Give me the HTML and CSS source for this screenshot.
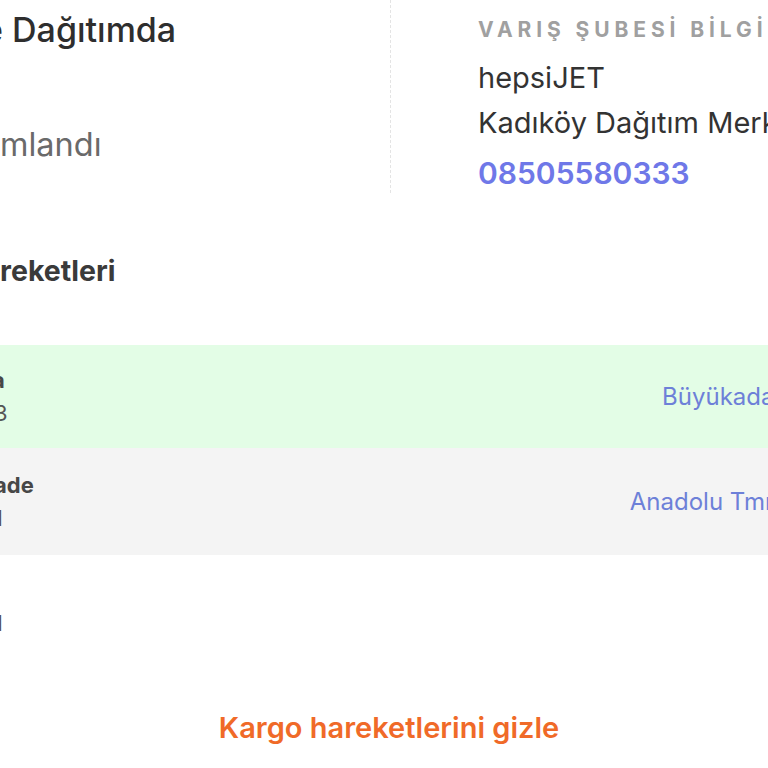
FILE: index.html
```html
<!DOCTYPE html>
<html lang="tr">
<head>
<meta charset="utf-8">
<title>Kargo Takip</title>
<link rel="stylesheet" href="styles.css">
</head>
<body>
<div class="page">
  <section class="summary">
    <div class="status">
      <p class="status-title shift-l">e Dağıtımda</p>
      <p class="status-sub">mlandı</p>
    </div>
    <div class="branch">
      <p class="branch-label">VARIŞ ŞUBESİ BİLGİLERİ</p>
      <p class="branch-line branch-first">hepsiJET</p>
      <p class="branch-line">Kadıköy Dağıtım Merkezi</p>
      <a class="branch-phone" href="#">08505580333</a>
    </div>
  </section>

  <h2 class="moves-title">reketleri</h2>

  <div class="moves">
    <div class="move move-current">
      <div class="move-info">
        <span class="move-name shift-m">a</span>
        <span class="move-date shift-s">3</span>
      </div>
      <span class="move-place">Büyükada Şubesi</span>
    </div>
    <div class="move move-alt">
      <div class="move-info">
        <span class="move-name shift-s">ade</span>
        <span class="move-date shift-s">1</span>
      </div>
      <span class="move-place">Anadolu Tmm. Şube</span>
    </div>
    <div class="move">
      <div class="move-info">
        <span class="move-name">&nbsp;</span>
        <span class="move-date shift-s">1</span>
      </div>
      <span class="move-place">&nbsp;</span>
    </div>
  </div>

  <div class="toggle-wrap">
    <button class="toggle" type="button">Kargo hareketlerini gizle</button>
  </div>
</div>
</body>
</html>
```

FILE: styles.css
```css
html, body {
  margin: 0;
  padding: 0;
  background: #ffffff;
  overflow: hidden;
}

body {
  font-family: Inter, "Noto Sans", "Liberation Sans", sans-serif;
  color: #333333;
  width: 768px;
  height: 768px;
}

.page {
  width: 920px;
}

p {
  margin: 0;
}

.shift-s { margin-left: -6px; }
.shift-m { margin-left: -8px; }
.shift-l { margin-left: -17px; }

/* summary */
.summary {
  display: grid;
  grid-template-columns: 390px 1fr;
  height: 193px;
}

.status {
  padding-top: 9px;
  display: flex;
  flex-direction: column;
}

.status-title {
  font-size: 34px;
  line-height: 42px;
  font-weight: 500;
  color: #2e2e2e;
  white-space: nowrap;
}

.status-sub {
  margin-top: 74px;
  font-size: 32.5px;
  line-height: 40px;
  color: #6a6a6a;
}

.branch {
  border-left: 1px dashed #e4e4e4;
  padding-left: 87px;
  padding-top: 17px;
  display: flex;
  flex-direction: column;
  align-items: flex-start;
}

.branch-label {
  font-size: 21px;
  line-height: 26px;
  font-weight: 700;
  letter-spacing: 4.9px;
  color: #a0a0a0;
  white-space: nowrap;
}

.branch-line {
  font-size: 29px;
  line-height: 45px;
  color: #333333;
  white-space: nowrap;
}

.branch-first {
  margin-top: 12px;
}

.branch-phone {
  margin-top: 8px;
  font-size: 30px;
  line-height: 40px;
  font-weight: 600;
  color: #6f78e8;
  text-decoration: none;
}

/* movements */
.moves-title {
  margin: 60px 0 0 0;
  font-size: 28.5px;
  line-height: 36px;
  font-weight: 700;
  color: #3a3a3a;
}

.moves {
  margin-top: 56px;
  display: flex;
  flex-direction: column;
}

.move {
  display: flex;
  align-items: center;
  justify-content: space-between;
  height: 104px;
  padding-right: 62px;
  box-sizing: border-box;
}

.move-current {
  background: #e3fde6;
  height: 103px;
}

.move-alt {
  background: #f4f4f4;
  height: 107px;
}

.move-info {
  display: flex;
  flex-direction: column;
  align-items: flex-start;
  font-size: 22px;
  line-height: 33px;
}

.move-name {
  font-weight: 700;
  color: #474747;
}

.move-date {
  color: #555555;
}

.move-place {
  font-size: 24px;
  line-height: 32px;
  color: #6d80d8;
  white-space: nowrap;
}

/* toggle */
.toggle-wrap {
  width: 778px;
  display: flex;
  justify-content: center;
  margin-top: 50px;
}

.toggle {
  background: none;
  border: none;
  padding: 0;
  font-family: Inter, "Noto Sans", "Liberation Sans", sans-serif;
  font-size: 29px;
  line-height: 38px;
  font-weight: 600;
  color: #f06a28;
  cursor: pointer;
}
```
